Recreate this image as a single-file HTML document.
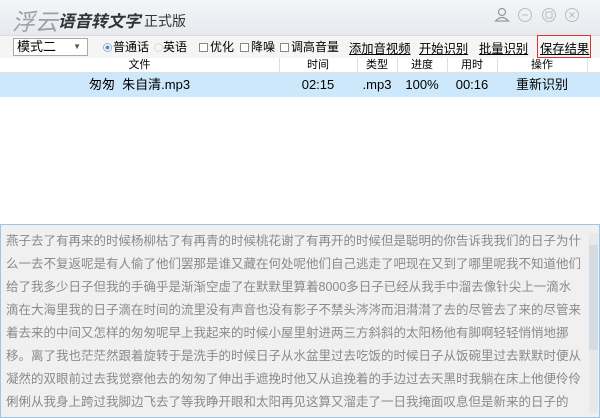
<!DOCTYPE html><html><head><meta charset="utf-8"><style>
*{margin:0;padding:0;box-sizing:border-box}
body{width:600px;height:418px;overflow:hidden;background:#fff;font-family:"Liberation Sans","Noto Sans CJK SC",sans-serif;position:relative;color:#000}
.a{position:absolute;white-space:nowrap}
.title{left:0;top:0;width:600px;height:35px;background:linear-gradient(#f4f6f8,#e6eaee)}
.tb{left:0;top:35px;width:600px;height:23px;background:#f5f5f5;border-top:1px solid #d8dde2}
.hd{left:0;top:58px;width:600px;height:15px;background:#fff;border-bottom:1px solid #e0e0e0;font-size:11px;line-height:14px}
.row{left:0;top:73px;width:600px;height:24px;background:#cde8fb;font-size:13px;line-height:24px}
.c{position:absolute;text-align:center}
.v{position:absolute;top:0;width:1px;height:15px;background:#ddd}
.lk{font-size:12.3px;text-decoration:underline;top:39px}
.op{font-size:12px;top:40px;line-height:14px}
.txt{left:0;top:224px;width:600px;height:194px;background:#f0f0f0;border:1px solid #9cc6e8}
.ln{position:absolute;left:5px;font-size:12.5px;color:#8a8a8a;line-height:23px}
.cb{position:absolute;top:43px;width:9px;height:9px;border:1px solid #888;background:#fff}
.rd{position:absolute;top:43px;width:9px;height:9px;border-radius:50%}
</style></head><body>
<div class="a title"></div>
<div class="a" style="left:12px;top:3px;font-size:23px;font-style:italic;color:#9aa0a6">浮云</div>
<div class="a" style="left:58px;top:8px;font-size:16.5px;font-style:italic;font-weight:bold;color:#333">语音转文字</div>
<div class="a" style="left:144px;top:11px;font-size:14px;color:#333">正式版</div>
<svg class="a" style="left:492px;top:6px" width="100" height="20">
<circle cx="10" cy="6" r="3.5" fill="none" stroke="#999" stroke-width="1.2"/><path d="M3.5 15 Q10 8 16.5 15 Z" fill="none" stroke="#999" stroke-width="1.2"/>
<circle cx="33" cy="9" r="6.5" fill="none" stroke="#bbb"/><line x1="30" y1="9" x2="36" y2="9" stroke="#bbb"/>
<circle cx="57" cy="9" r="6.5" fill="none" stroke="#bbb"/><rect x="54" y="6" width="6" height="6" fill="none" stroke="#bbb"/>
<circle cx="80" cy="9" r="6.5" fill="none" stroke="#bbb"/><path d="M77.5 6.5l5 5M82.5 6.5l-5 5" stroke="#bbb"/>
</svg>
<div class="a tb"></div>
<div class="a" style="left:13px;top:38px;width:75px;height:18px;border:1px solid #aaa;background:#fff;font-size:13px;line-height:16px;padding-left:3px">模式二<span style="position:absolute;right:6px;top:0;font-size:8px;color:#555">▼</span></div>
<div class="rd" style="left:103px;border:1px solid #aaa;background:radial-gradient(#3a8ee6 35%,#fff 45%)"></div>
<div class="a op" style="left:113px">普通话</div>
<div class="rd" style="left:154px;border:1px solid #ddd"></div>
<div class="a op" style="left:163px">英语</div>
<div class="cb" style="left:199px"></div><div class="a op" style="left:210px">优化</div>
<div class="cb" style="left:240px"></div><div class="a op" style="left:251px">降噪</div>
<div class="cb" style="left:280px"></div><div class="a op" style="left:291px">调高音量</div>
<div class="a lk" style="left:349px">添加音视频</div>
<div class="a lk" style="left:419px">开始识别</div>
<div class="a lk" style="left:479px">批量识别</div>
<div class="a lk" style="left:540px">保存结果</div>
<div class="a" style="left:537px;top:35px;width:54px;height:23px;border:1px solid #e03030"></div>
<div class="a hd">
<div class="c" style="left:0;width:279px">文件</div><div class="v" style="left:279px"></div>
<div class="c" style="left:279px;width:78px">时间</div><div class="v" style="left:357px"></div>
<div class="c" style="left:357px;width:40px">类型</div><div class="v" style="left:397px"></div>
<div class="c" style="left:397px;width:50px">进度</div><div class="v" style="left:447px"></div>
<div class="c" style="left:447px;width:50px">用时</div><div class="v" style="left:497px"></div>
<div class="c" style="left:497px;width:90px">操作</div><div class="v" style="left:587px"></div>
</div>
<div class="a row">
<div class="c" style="left:0;width:279px">匆匆&nbsp; 朱自清.mp3</div>
<div class="c" style="left:279px;width:78px">02:15</div>
<div class="c" style="left:352px;width:50px">.mp3</div>
<div class="c" style="left:397px;width:50px">100%</div>
<div class="c" style="left:447px;width:50px">00:16</div>
<div class="c" style="left:497px;width:90px">重新识别</div>
</div>
<div class="a txt">
<div class="ln" style="top:5px">燕子去了有再来的时候杨柳枯了有再青的时候桃花谢了有再开的时候但是聪明的你告诉我我们的日子为什</div>
<div class="ln" style="top:28px">么一去不复返呢是有人偷了他们罢那是谁又藏在何处呢他们自己逃走了吧现在又到了哪里呢我不知道他们</div>
<div class="ln" style="top:51px">给了我多少日子但我的手确乎是渐渐空虚了在默默里算着8000多日子已经从我手中溜去像针尖上一滴水</div>
<div class="ln" style="top:74px">滴在大海里我的日子滴在时间的流里没有声音也没有影子不禁头涔涔而泪潸潸了去的尽管去了来的尽管来</div>
<div class="ln" style="top:97px">着去来的中间又怎样的匆匆呢早上我起来的时候小屋里射进两三方斜斜的太阳杨他有脚啊轻轻悄悄地挪</div>
<div class="ln" style="top:120px">移。离了我也茫茫然跟着旋转于是洗手的时候日子从水盆里过去吃饭的时候日子从饭碗里过去默默时便从</div>
<div class="ln" style="top:143px">凝然的双眼前过去我觉察他去的匆匆了伸出手遮挽时他又从追挽着的手边过去天黑时我躺在床上他便伶伶</div>
<div class="ln" style="top:166px">俐俐从我身上跨过我脚边飞去了等我睁开眼和太阳再见这算又溜走了一日我掩面叹息但是新来的日子的</div>
<div style="position:absolute;right:1px;top:8px;width:9px;height:180px;background:#e8e8e8"><div style="margin-top:12px;height:105px;background:#d4dbe2"></div></div>
</div>
</body></html>
